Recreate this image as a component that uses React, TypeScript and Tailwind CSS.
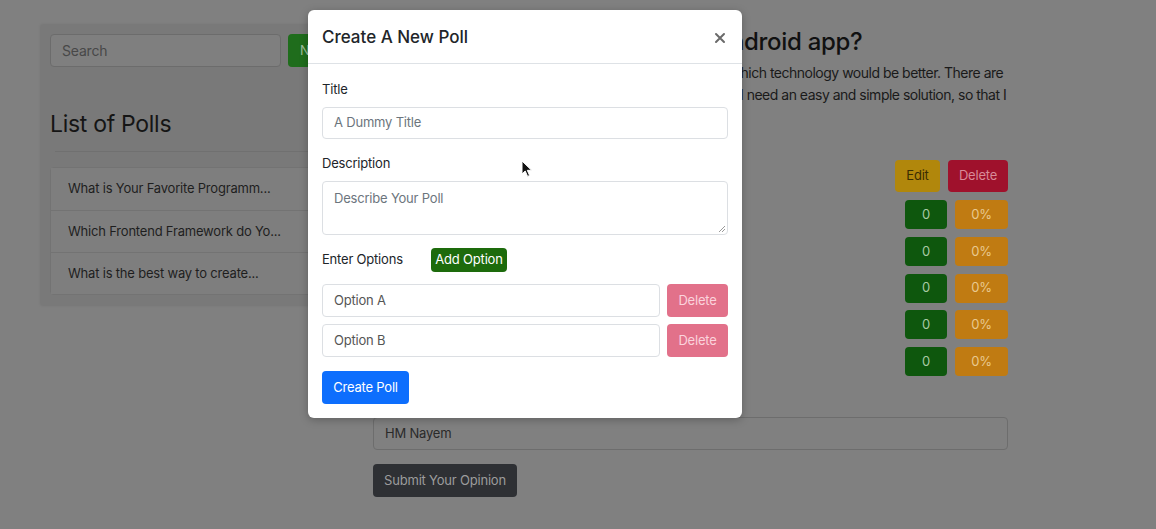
const polls = [
  "What is Your Favorite Programm...",
  "Which Frontend Framework do Yo...",
  "What is the best way to create...",
];

const options = ["Flutter", "React Native", "Kotlin", "Java", "Ionic"];

function Cursor() {
  return (
    <svg width="12" height="18" viewBox="0 0 12 18" className="absolute left-[521px] top-[160px]">
      <path d="M1 1 L1 14 L4.2 11 L6.6 16.4 L8.6 15.5 L6.3 10.3 L10.6 10.3 Z" fill="#111" stroke="#fff" strokeWidth="1" strokeLinejoin="round" />
    </svg>
  );
}

export default function App() {
  return (
    <div className="relative w-[1156px] h-[529px] overflow-hidden bg-[#808080] font-['Inter','Liberation_Sans',sans-serif] text-[13px] tracking-[-0.2px] text-[#1c1c1c]">
      {/* page behind the backdrop */}
      <div className="flex items-start gap-4 pl-[41px] pt-[25px]">
        <aside className="w-[316px] h-[280px] bg-[#797979] p-[9px] shadow-[0_0_3px_rgba(0,0,0,0.15)]">
          <div className="flex gap-[7px]">
            <div className="w-[231px] h-[33px] rounded border border-[#6c6c6c] bg-[#7f7f7f] px-[11px] flex items-center text-[14px] text-[#484848]">
              Search
            </div>
            <button className="h-[33px] px-3 rounded bg-[#1f6d1c] text-[#9fbf9c]">New</button>
          </div>
          <h2 className="mt-[42px] text-[23px] leading-[30px] tracking-[-0.3px] text-[#151515]">List of Polls</h2>
          <div className="mt-[12px] mx-[5px] border-t border-[#707070]" />
          <ul className="mt-[15px] -mr-[9px] border border-[#737373] rounded-sm">
            {polls.map((p, i) => (
              <li
                key={p}
                className={`h-[42px] flex items-center pl-[17px] text-[#1e1e1e] bg-[#7e7e7e] ${i > 0 ? "border-t border-[#737373]" : ""}`}
              >
                {p}
              </li>
            ))}
          </ul>
        </aside>

        <main className="w-[635px] pt-[2px]">
          <h1 className="text-[24px] leading-[30px] font-medium tracking-[-0.3px] text-[#111] whitespace-nowrap">
            What is the best way to create android app?
          </h1>
          <p className="mt-[5px] text-[14px] leading-[22px] tracking-[-0.5px] text-[#1a1a1a] whitespace-nowrap">
            I want to develop an android app but I am confused about which technology would be better. There are
            <br />
            many options such as Flutter, React Native, Kotlin and Java. I need an easy and simple solution, so that I
          </p>
          <div className="mt-[54px] flex justify-end gap-2">
            <button className="h-8 w-[45px] rounded bg-[#b1870c] text-[#3a2c02]">Edit</button>
            <button className="h-8 w-[60px] rounded bg-[#9f112c] text-[#d88a98]">Delete</button>
          </div>
          <div className="mt-2 flex flex-col gap-[7.75px]">
            {options.map((o) => (
              <div key={o} className="flex items-center gap-2">
                <span className="flex-1 text-[#1a1a1a]">{o}</span>
                <span className="w-[42px] h-[29px] rounded bg-[#0e570d] flex items-center justify-center text-[#a9c9a3]">0</span>
                <span className="w-[53px] h-[29px] rounded bg-[#c07b12] flex items-center justify-center text-[#e9c98f]">0%</span>
              </div>
            ))}
          </div>
          <div className="mt-[41px] h-[33px] rounded border border-[#6d6d6d] bg-[#808080] px-[11px] flex items-center text-[#2a2a2a]">
            HM Nayem
          </div>
          <button className="mt-[14px] h-[33px] w-[144px] rounded bg-[#2e3034] text-[#9c9c9c]">
            Submit Your Opinion
          </button>
        </main>
      </div>

      {/* modal */}
      <div className="absolute left-[308px] top-[10px] w-[434px] rounded-md bg-white shadow-[0_2px_8px_rgba(0,0,0,0.25)]">
        <div className="h-[54px] px-[14px] pt-[2px] flex items-center justify-between border-b border-[#dee2e6]">
          <h3 className="text-[17px] font-medium tracking-normal text-[#212529]">Create A New Poll</h3>
          <svg width="12" height="12" viewBox="0 0 12 12" className="mr-[2px]">
            <path d="M2 2 L10 10 M10 2 L2 10" stroke="#6a6a6a" strokeWidth="2" strokeLinecap="round" />
          </svg>
        </div>
        <div className="px-[14px] pt-[15px] pb-[14px] text-[#212529]">
          <label className="block leading-5">Title</label>
          <div className="mt-2 h-8 rounded border border-[#dcdfe3] px-[11px] flex items-center text-[#6c757d]">
            A Dummy Title
          </div>
          <label className="mt-[14px] block leading-5">Description</label>
          <div className="relative mt-2 h-[54px] rounded border border-[#dcdfe3] px-[11px] pt-[7px] text-[#6c757d]">
            Describe Your Poll
            <svg width="8" height="8" viewBox="0 0 8 8" className="absolute right-[1px] bottom-[1px]">
              <path d="M7 1 L1 7 M7 4 L4 7" stroke="#9a9a9a" strokeWidth="1" />
            </svg>
          </div>
          <div className="mt-[13px] flex items-center">
            <span className="w-[109px]">Enter Options</span>
            <button className="h-6 w-[76px] rounded bg-[#1d6b0c] text-white">Add Option</button>
          </div>
          <div className="mt-3 flex flex-col gap-[7px]">
            {["Option A", "Option B"].map((o) => (
              <div key={o} className="flex gap-[7px]">
                <div className="flex-1 h-[33px] rounded border border-[#dcdfe3] px-[11px] flex items-center text-[#555]">
                  {o}
                </div>
                <button className="w-[61px] h-[33px] rounded bg-[#e2718a] text-[#fbd3dc]">Delete</button>
              </div>
            ))}
          </div>
          <button className="mt-[14px] h-[33px] w-[87px] rounded bg-[#0d6efd] text-white">Create Poll</button>
        </div>
      </div>

      <Cursor />
    </div>
  );
}
